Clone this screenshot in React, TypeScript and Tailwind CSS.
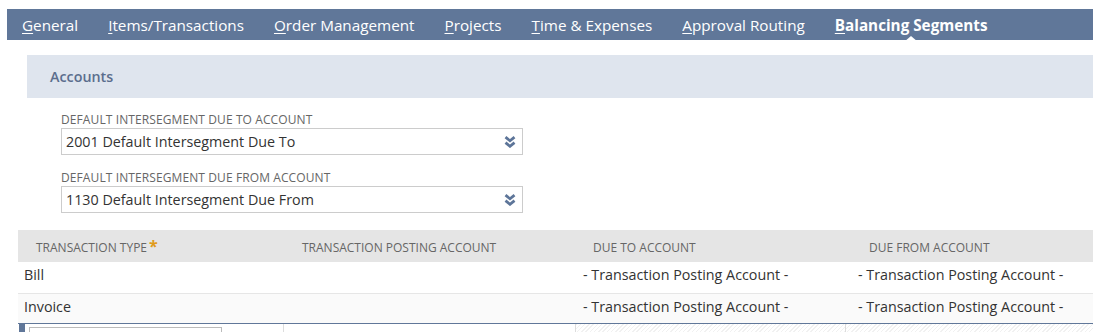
import { ReactNode } from "react";

const tabs = [
  { first: "G", rest: "eneral" },
  { first: "I", rest: "tems/Transactions" },
  { first: "O", rest: "rder Management" },
  { first: "P", rest: "rojects" },
  { first: "T", rest: "ime & Expenses" },
  { first: "A", rest: "pproval Routing" },
  { first: "B", rest: "alancing Segments", active: true },
];

function ChevronsDown() {
  return (
    <svg width="12" height="12" viewBox="0 0 12 12" className="text-[#5d7599]">
      <path d="M1.5 1.2 L6 4.8 L10.5 1.2" fill="none" stroke="currentColor" strokeWidth="2.8" />
      <path d="M1.5 6.7 L6 10.3 L10.5 6.7" fill="none" stroke="currentColor" strokeWidth="2.8" />
    </svg>
  );
}

function SelectField({ label, value }: { label: string; value: string }) {
  return (
    <div className="flex flex-col">
      <span className="text-[12px] leading-[15px] text-[#666] uppercase tracking-[0.1px]">{label}</span>
      <div className="mt-[1px] w-[462px] h-[27px] border border-[#ccc] bg-white flex items-center justify-between pl-[4px] pr-[6px]">
        <span className="text-[14.3px] text-[#333]">{value}</span>
        <ChevronsDown />
      </div>
    </div>
  );
}

function Cell({ children, className = "" }: { children?: ReactNode; className?: string }) {
  return <div className={"flex items-center " + className}>{children}</div>;
}

const cols = "grid grid-cols-[266px_292px_270px_1fr]";
const hatch = "bg-[repeating-linear-gradient(135deg,#f1f1f1_0px,#f1f1f1_1px,#fff_1px,#fff_3px)]";

export default function App() {
  return (
    <div className="w-[1093px] h-[332px] bg-white overflow-hidden font-['Open_Sans',sans-serif]">
      {/* tab bar */}
      <div className="mt-[9px] ml-[7px] h-[31px] pt-[2px] bg-[#607799] flex items-center">
        {tabs.map((t) => (
          <div
            key={t.first + t.rest}
            className={
              "relative px-[15px] text-[15.25px] text-white whitespace-nowrap " + (t.active ? "font-bold" : "")
            }
          >
            <span className="underline underline-offset-[2px]">{t.first}</span>
            {t.rest}
            {t.active && (
              <span className="absolute left-1/2 -translate-x-1/2 top-[22px] w-0 h-0 border-l-[7px] border-r-[7px] border-b-[6px] border-l-transparent border-r-transparent border-b-white" />
            )}
          </div>
        ))}
      </div>

      {/* Accounts section */}
      <div className="mt-[15px] ml-[27px] h-[43px] bg-[#dfe5ee] flex items-center pl-[23px]">
        <span className="text-[14.3px] font-semibold text-[#5b6e8d]">Accounts</span>
      </div>

      <div className="ml-[61px] mt-[14px] flex flex-col gap-[15px]">
        <SelectField label="Default Intersegment Due To Account" value="2001 Default Intersegment Due To" />
        <SelectField label="Default Intersegment Due From Account" value="1130 Default Intersegment Due From" />
      </div>

      {/* table */}
      <div className="ml-[18px] mt-[17px]">
        <div className={cols + " h-[32px] pt-[4px] bg-[#e5e5e5] text-[12px] text-[#666]"}>
          <Cell className="pl-[18px]">
            TRANSACTION TYPE<span className="ml-[2px] text-[#e09b1a] text-[16px] font-bold leading-none -mt-[4px]">*</span>
          </Cell>
          <Cell className="pl-[18px]">TRANSACTION POSTING ACCOUNT</Cell>
          <Cell className="pl-[17px]">DUE TO ACCOUNT</Cell>
          <Cell className="pl-[23px]">DUE FROM ACCOUNT</Cell>
        </div>
        <div className={cols + " h-[32px] pb-[6px] bg-white text-[14.3px] text-[#333] border-b border-[#e6e6e6]"}>
          <Cell className="pl-[6px]">Bill</Cell>
          <Cell />
          <Cell className="pl-[7px]">- Transaction Posting Account -</Cell>
          <Cell className="pl-[12px]">- Transaction Posting Account -</Cell>
        </div>
        <div className={cols + " h-[30px] pb-[4px] bg-[#fafafa] text-[14.3px] text-[#333] border-b border-[#607799]"}>
          <Cell className="pl-[6px]">Invoice</Cell>
          <Cell />
          <Cell className="pl-[7px]">- Transaction Posting Account -</Cell>
          <Cell className="pl-[12px]">- Transaction Posting Account -</Cell>
        </div>
        <div className={cols + " h-[12px]"}>
          <div className="flex border-r border-[#ddd]">
            <div className="w-[6px] bg-[#607799] ml-[1px]" />
            <div className="ml-[4px] mt-[3px] w-[193px] border-t border-l border-r border-[#bbb]" />
          </div>
          <div className="border-r border-[#ddd]" />
          <div className={"border-r border-[#ddd] " + hatch} />
          <div className={hatch} />
        </div>
      </div>
    </div>
  );
}
